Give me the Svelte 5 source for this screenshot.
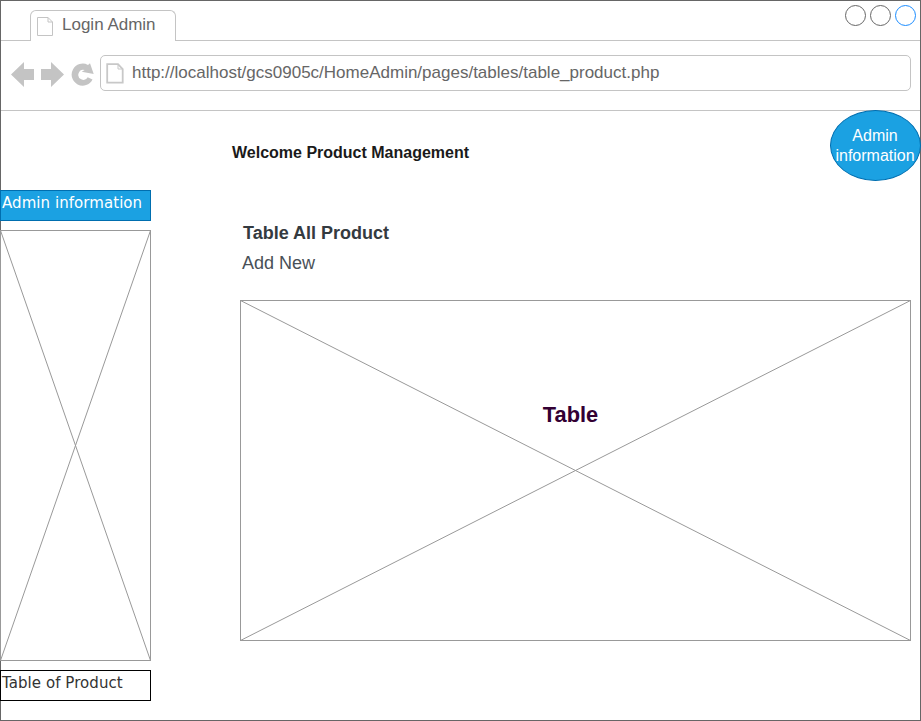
<script>
  const url = 'http://localhost/gcs0905c/HomeAdmin/pages/tables/table_product.php';
  const windowButtons = ['#666666', '#666666', '#1a8cff'];
</script>

{#snippet placeholder(w, h)}
  <svg class="cross" width={w} height={h} viewBox="0 0 {w} {h}">
    <rect x="0.5" y="0.5" width={w - 1} height={h - 1} />
    <path d="M.5 .5L{w - 0.5} {h - 0.5}M{w - 0.5} .5L.5 {h - 0.5}" />
  </svg>
{/snippet}

<div class="window">
  <header class="tabs">
    <div class="tab">
      <svg class="doc" width="18" height="21" viewBox="0 0 18 21">
        <path d="M1.5 1.5H12L16.5 6V19.5H1.5ZM12 1.5V6H16.5" fill="none" stroke="#c4c4c4" />
      </svg>
      <span>Login Admin</span>
    </div>
    <div class="buttons">
      {#each windowButtons as color}
        <svg width="22" height="22" viewBox="0 0 22 22">
          <circle cx="10.5" cy="11.5" r="10" fill="none" stroke={color} />
        </svg>
      {/each}
    </div>
  </header>

  <div class="toolbar">
    <svg class="nav" width="84" height="28" viewBox="11 61 84 28">
      <g fill="#c4c4c4">
        <path d="M11 74.5L24 62V69H34V80H24V87Z" />
        <path d="M64 74.5L51 62V69H41V80H51V87Z" />
        <path d="M90 63.3L93.7 74L81.7 71.7L84.7 70A5 5 0 1 0 87.700 77.300L92.500 79.500A11 11 0 1 1 88 65Z" />
      </g>
    </svg>
    <div class="address">
      <svg width="20" height="22" viewBox="0 0 20 22">
        <path d="M2.2 1.2H13L17.700 6V19.700H2.2Z" fill="none" stroke="#c8c8c8" stroke-width="1.8" />
        <path d="M13 1.2V6H17.700" fill="none" stroke="#c8c8c8" />
      </svg>
      <span>{url}</span>
    </div>
  </div>

  <div class="content">
    <aside>
      <div class="item active">Admin information</div>
      {@render placeholder(151, 431)}
      <div class="item">Table of Product</div>
    </aside>
    <main>
      <div class="top">
        <h1>Welcome Product Management</h1>
        <div class="account">Admin<br />information</div>
      </div>
      <h2>Table All Product</h2>
      <div class="add">Add New</div>
      <div class="table">
        {@render placeholder(671, 341)}
        <h3>Table</h3>
      </div>
    </main>
  </div>
</div>

<style>
  :global(body) { margin: 0; background: #fff; }
  .window {
    width: 921px;
    height: 721px;
    overflow: hidden;
    box-shadow: inset 0 0 0 1px #666;
    font-family: 'Liberation Sans', Arial, sans-serif;
    color: #666;
  }
  svg { display: block; flex: none; }
  .tabs {
    box-sizing: border-box;
    height: 41px;
    padding: 10px 4px 0 30px;
    display: flex;
    justify-content: space-between;
    align-items: flex-start;
    background: linear-gradient(#c4c4c4, #c4c4c4) 1px 40px / 919px 1px no-repeat;
  }
  .tab {
    box-sizing: border-box;
    width: 146px;
    height: 31px;
    border: 1px solid #c4c4c4;
    border-bottom: 0;
    border-radius: 6px 6px 0 0;
    background: #fff;
    display: flex;
    font-size: 17px;
    line-height: 20px;
    padding: 4px 0 0 5px;
  }
  .doc { margin-top: 1px; }
  .tab span { margin-left: 8px; }
  .buttons { display: flex; gap: 3px; margin-top: -6px; }
  .toolbar {
    box-sizing: border-box;
    height: 70px;
    padding: 14px 10px 0 11px;
    display: flex;
    background: linear-gradient(#c4c4c4, #c4c4c4) 1px 69px / 919px 1px no-repeat;
  }
  .nav { margin-top: 6px; }
  .address {
    box-sizing: border-box;
    width: 811px;
    height: 36px;
    margin-left: 5px;
    border: 1px solid #c4c4c4;
    border-radius: 5px;
    display: flex;
    padding: 7px 0 0 4px;
    font-size: 17px;
    line-height: 20px;
    white-space: nowrap;
  }
  .address span { margin-left: 7px; }
  .content { display: flex; }
  aside {
    width: 151px;
    padding-top: 79px;
    display: flex;
    flex-direction: column;
    gap: 9px;
  }
  .item {
    box-sizing: border-box;
    height: 31px;
    border: 1px solid #000;
    padding: 2px 0 0 1px;
    font: 15px/20px 'DejaVu Sans', Verdana, sans-serif;
    letter-spacing: 0.06px;
    color: #333;
    white-space: nowrap;
  }
  .active { background: #1ba1e2; border-color: #006eaf; color: #fff; }
  .cross { fill: #fff; stroke: #999; stroke-width: 1; }
  main { width: 681px; margin-left: 81px; }
  .top { display: flex; justify-content: space-between; margin-right: -8px; }
  h1, h2, h3 { margin: 0; font-weight: bold; }
  h1 { font-size: 16px; line-height: 20px; margin-top: 32px; color: #1a1a1a; }
  .account {
    box-sizing: border-box;
    width: 91px;
    height: 71px;
    margin-top: -1px;
    border: 1px solid #006eaf;
    border-radius: 50%;
    background: #1ba1e2;
    color: #fff;
    font-size: 16px;
    line-height: 20px;
    text-align: center;
    padding: 15px 1px 0 0;
  }
  h2 { margin: 40px 0 0 11px; font-size: 18px; line-height: 24px; color: #343a40; }
  .add { margin: 6px 0 0 10px; font-size: 18px; line-height: 24px; color: #495057; }
  .table { margin: 25px 0 0 8px; display: grid; width: 671px; }
  .table > :global(*) { grid-area: 1 / 1; }
  h3 { margin: 102px 10px 0 0; text-align: center; font-size: 21.8px; line-height: 26px; color: #330033; }
</style>
